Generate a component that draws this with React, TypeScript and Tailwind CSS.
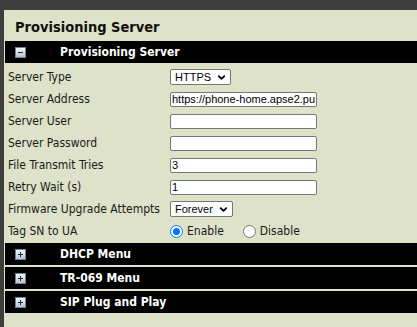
import { ChevronDown } from 'lucide-react';

const rows = [
  { label: 'Server Type', kind: 'select', value: 'HTTPS' },
  { label: 'Server Address', kind: 'input', value: 'https://phone-home.apse2.pu' },
  { label: 'Server User', kind: 'input', value: '' },
  { label: 'Server Password', kind: 'input', value: '' },
  { label: 'File Transmit Tries', kind: 'input', value: '3' },
  { label: 'Retry Wait (s)', kind: 'input', value: '1' },
  { label: 'Firmware Upgrade Attempts', kind: 'select', value: 'Forever' },
  { label: 'Tag SN to UA', kind: 'radio', value: 'Enable' },
];

const ToggleIcon = ({ open }: { open: boolean }) => (
  <span className="flex h-[11px] w-[11px] items-center justify-center border border-[#6f7f97] bg-gradient-to-b from-[#f4f6fa] to-[#b9c3d3]">
    <span className="relative block h-[1px] w-[5px] bg-[#1c2a44]">
      {!open && <span className="absolute left-[2px] top-[-2px] block h-[5px] w-[1px] bg-[#1c2a44]" />}
    </span>
  </span>
);

const SectionBar = ({ title, open }: { title: string; open: boolean }) => (
  <div className="flex h-[22px] items-center bg-black">
    <div className="w-[55px] pl-[10px]">
      <ToggleIcon open={open} />
    </div>
    <span className="text-[12px] font-bold text-white">{title}</span>
  </div>
);

const Select = ({ value }: { value: string }) => (
  <div className="flex h-[16px] items-center gap-[5px] rounded-[2px] border border-[#767676] bg-white pl-[4px] pr-[3px] font-['Liberation_Sans',sans-serif] text-[11px] text-black">
    <span>{value}</span>
    <ChevronDown size={11} strokeWidth={4} />
  </div>
);

const Radio = ({ checked, label }: { checked: boolean; label: string }) => (
  <div className="flex items-center gap-[4px]">
    {checked ? (
      <span className="flex h-[13px] w-[13px] items-center justify-center rounded-full border-[1.5px] border-[#0075ff] bg-white">
        <span className="h-[7px] w-[7px] rounded-full bg-[#0075ff]" />
      </span>
    ) : (
      <span className="h-[13px] w-[13px] rounded-full border border-[#767676] bg-white" />
    )}
    <span>{label}</span>
  </div>
);

const App = () => {
  return (
    <div className="flex h-[327px] w-[417px] flex-col overflow-hidden bg-[#3e3e3e] font-['DejaVu_Sans_Condensed','DejaVu_Sans',sans-serif]">
      <div className="h-[10px] shrink-0" />
      <div className="ml-[4px] flex-1 bg-[#dde2c8] pl-[1px]">
        <h1 className="pl-[10px] pt-[8px] pb-[4px] text-[14.5px] font-bold leading-[19px] text-[#101010]">
          Provisioning Server
        </h1>

        <SectionBar title="Provisioning Server" open />

        <div className="flex flex-col pl-[3px] pt-[3px] pb-[1px] text-[12px] text-[#1a1a1a]">
          {rows.map((row) => (
            <div key={row.label} className="flex h-[22px] items-center">
              <span className="w-[162px] shrink-0 whitespace-nowrap">{row.label}</span>
              {row.kind === 'select' && <Select value={row.value} />}
              {row.kind === 'input' && (
                <div className="flex h-[15px] w-[147px] items-center overflow-hidden whitespace-nowrap rounded-[2px] border border-[#767676] bg-white pl-[1px] font-['Liberation_Sans',sans-serif] text-[11px] text-black">
                  {row.value}
                </div>
              )}
              {row.kind === 'radio' && (
                <div className="flex items-center gap-[19px]">
                  <Radio checked label="Enable" />
                  <Radio checked={false} label="Disable" />
                </div>
              )}
            </div>
          ))}
        </div>

        <div className="flex flex-col gap-[2px]">
          <SectionBar title="DHCP Menu" open={false} />
          <SectionBar title="TR-069 Menu" open={false} />
          <SectionBar title="SIP Plug and Play" open={false} />
        </div>
      </div>
    </div>
  );
};

export default App;
